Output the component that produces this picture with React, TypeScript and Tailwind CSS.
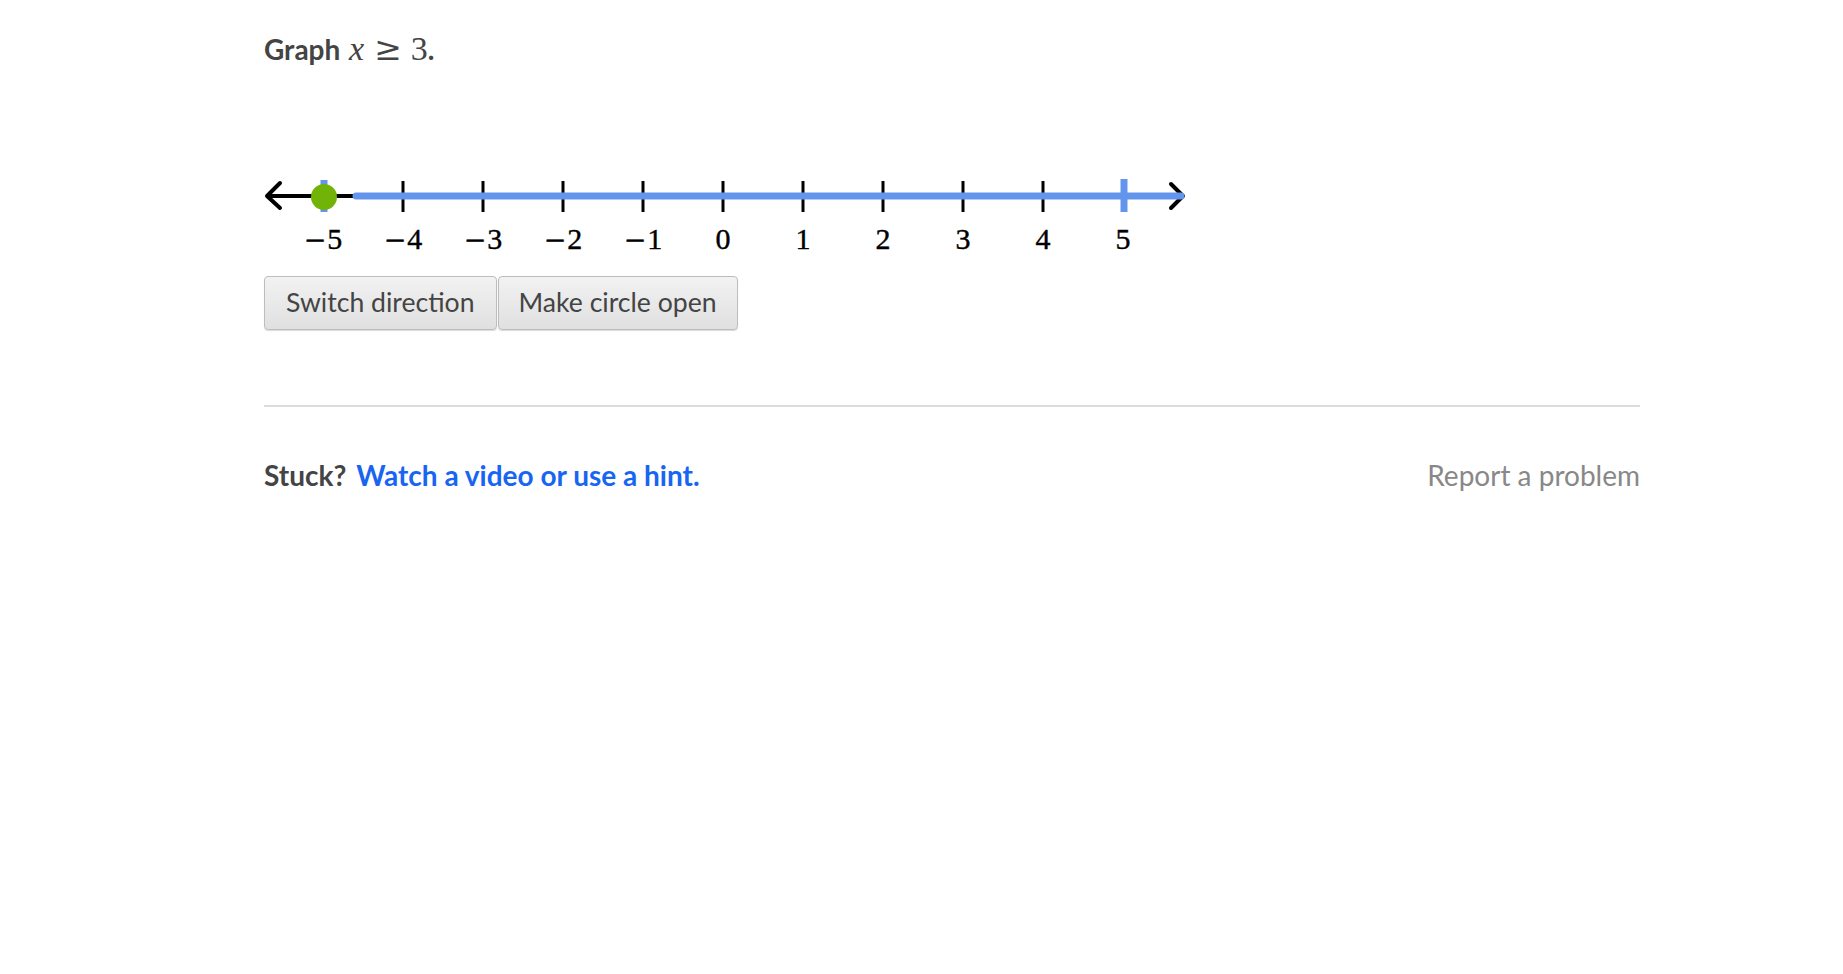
import React from 'react';

const BLUE = '#6495ed';
const GREEN = '#71b307';

const ticks = [-5, -4, -3, -2, -1, 0, 1, 2, 3, 4, 5];

function NumberLine() {
  // x of tick -5 in svg coords, 80px per unit
  const x0 = 59;
  const unit = 80;
  const y = 26;
  return (
    <svg width="930" height="90" viewBox="0 0 930 90" className="block">
      {/* base line, black */}
      <line x1="4" y1={y} x2="100" y2={y} stroke="#000" strokeWidth="4" />
      <polyline points={`16,${y - 13} 3,${y} 16,${y + 12}`} fill="none" stroke="#000" strokeWidth="4" strokeLinecap="round" strokeLinejoin="round" />
      <polyline points={`907,${y - 12} 919,${y} 907,${y + 12}`} fill="none" stroke="#000" strokeWidth="4" strokeLinecap="round" strokeLinejoin="round" />

      {/* ticks */}
      {ticks.map((t) =>
        t === 5 || t === -5 ? null : (
          <line key={t} x1={x0 + (t + 5) * unit} y1={y - 15} x2={x0 + (t + 5) * unit} y2={y + 16} stroke="#000" strokeWidth="3" />
        )
      )}
      <line x1={x0 + 10 * unit + 1} y1={y - 17} x2={x0 + 10 * unit + 1} y2={y + 16} stroke={BLUE} strokeWidth="7" />
      <line x1={x0 + 1} y1={y - 16} x2={x0 + 1} y2={y + 16} stroke={BLUE} strokeWidth="7" />

      {/* shaded ray */}
      <line x1="92" y1={y} x2="917" y2={y} stroke={BLUE} strokeWidth="7" strokeLinecap="round" />

      {/* point */}
      <circle cx={x0 + 1} cy={y + 1} r="13" fill={GREEN} />

      {/* labels */}
      {ticks.map((t) => (
        <text
          key={t}
          x={x0 + (t + 5) * unit}
          y="79"
          textAnchor="middle"
          fontSize="30"
          fill="#000"
          stroke="#000"
          strokeWidth="0.4"
          style={{ fontFamily: '"Liberation Serif", serif' }}
        >
          {t < 0 ? (
            <>
              <tspan style={{ fontFamily: '"DejaVu Serif", serif' }} fontSize="27">−</tspan>
              <tspan dx="1">{Math.abs(t)}</tspan>
            </>
          ) : (
            t
          )}
        </text>
      ))}
    </svg>
  );
}

export default function App() {
  return (
    <div className="min-h-screen bg-white font-['Lato',sans-serif] text-[#444]">
      <div className="ml-[264px] w-[1376px] pt-[31px]">
        {/* Question */}
        <div className="text-[28px] leading-[36px] font-bold text-[#444]">
          Graph{' '}
          <span className="font-['Liberation_Serif',serif] font-normal text-[34px] text-[#444]">
            <i className="ml-[2px]">x</i>
            <span className="ml-[10px] mr-[9px] font-['DejaVu_Serif',serif] text-[33px]">≥</span>3
          </span>
          .
        </div>

        {/* Number line */}
        <div className="mt-[103px]">
          <NumberLine />
        </div>

        {/* Controls */}
        <div className="mt-[16px] flex gap-[1px]">
          <button className="h-[54px] px-[21px] rounded-[4px] border border-[#bdbdbd] bg-gradient-to-b from-[#f2f2f2] to-[#e0e0e0] shadow-[0_1px_1px_rgba(0,0,0,0.15)] text-[26.6px] text-[#444]">
            Switch direction
          </button>
          <button className="h-[54px] px-[20px] rounded-[4px] border border-[#bdbdbd] bg-gradient-to-b from-[#f2f2f2] to-[#e0e0e0] shadow-[0_1px_1px_rgba(0,0,0,0.15)] text-[26.6px] text-[#444]">
            Make circle open
          </button>
        </div>

        {/* Divider */}
        <div className="mt-[75px] border-t-2 border-[#dcdcdc]" />

        {/* Footer */}
        <div className="mt-[50px] flex items-center justify-between leading-[36px]">
          <div className="text-[28px] font-bold">
            <span className="text-[#444]">Stuck?</span>
            <a className="ml-[10px] text-[#1865f2]">Watch a video or use a hint.</a>
          </div>
          <a className="text-[28px] text-[#888]">Report a problem</a>
        </div>
      </div>
    </div>
  );
}
